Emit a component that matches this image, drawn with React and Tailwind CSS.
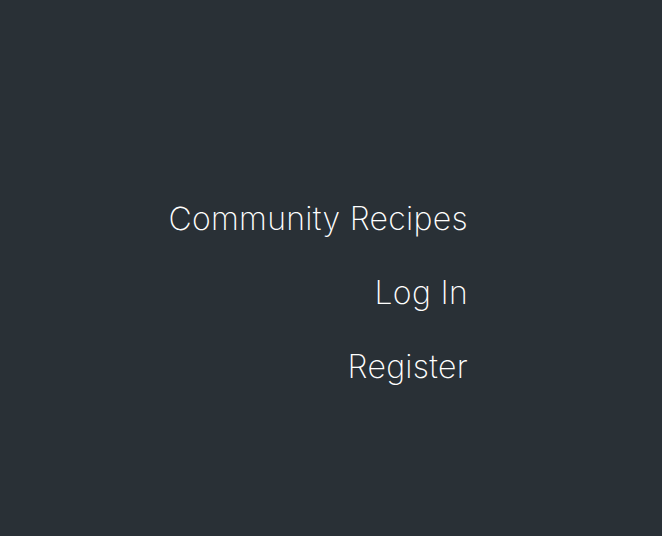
export default function App() {
  return (
    <div className="w-[662px] h-[536px] bg-[#293036] flex flex-col items-end pr-[194px] pt-[200px]" style={{ fontFamily: "Inter, 'Open Sans', sans-serif" }}>
      <div className="flex flex-col items-end gap-[36px] text-[32px] leading-[38px] font-extralight tracking-[0.3px] text-white">
        <span>Community Recipes</span>
        <span>Log In</span>
        <span>Register</span>
      </div>
    </div>
  );
}
